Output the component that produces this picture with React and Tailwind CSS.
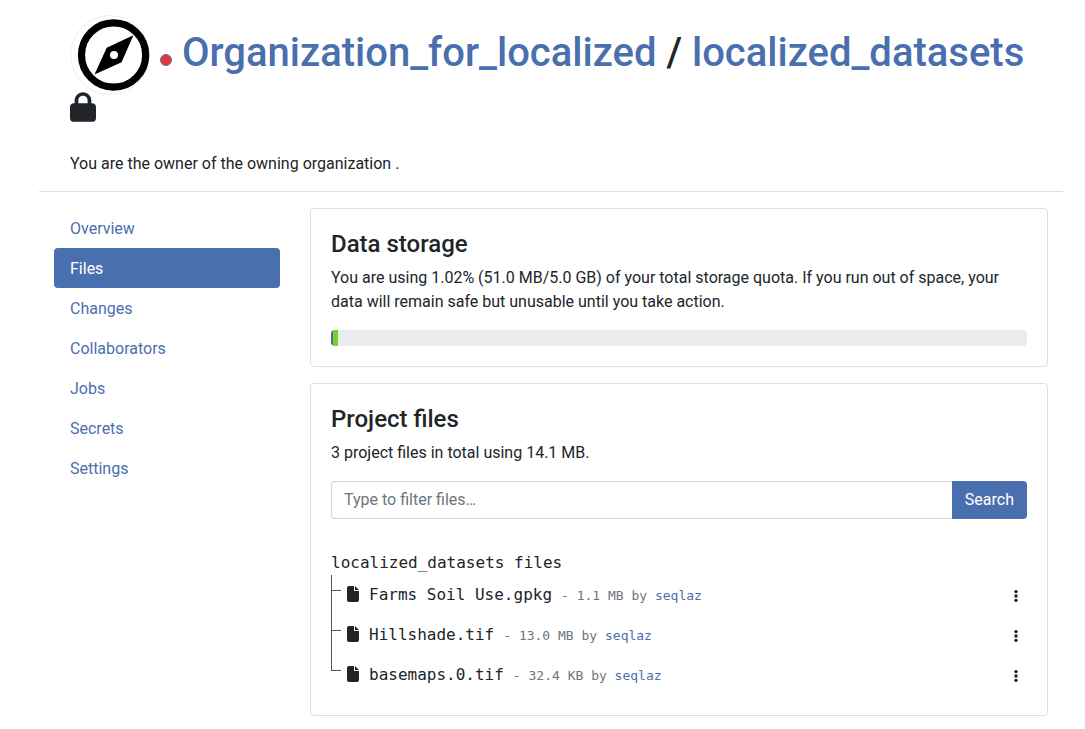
import { FaFile, FaLock } from "react-icons/fa6";

const navItems = ["Overview", "Files", "Changes", "Collaborators", "Jobs", "Secrets", "Settings"];

const files = [
  { name: "Farms Soil Use.gpkg", size: "1.1 MB", owner: "seqlaz" },
  { name: "Hillshade.tif", size: "13.0 MB", owner: "seqlaz" },
  { name: "basemaps.0.tif", size: "32.4 KB", owner: "seqlaz" },
];

function CompassAvatar() {
  return (
    <svg viewBox="0 0 80 80" className="size-20 shrink-0 rounded-full" aria-hidden="true">
      <circle cx="40" cy="40" r="39.5" fill="#fff" stroke="#ebebeb" />
      <circle cx="43.6" cy="40" r="32.1" fill="none" stroke="#000" strokeWidth="7.2" />
      <path
        fillRule="evenodd"
        d="M63.4 20.3 36.7 32.7 24.5 59.4 51.6 47.3ZM44 36a4 4 0 1 1 0 8 4 4 0 0 1 0-8Z"
      />
    </svg>
  );
}

function MoreIcon() {
  return (
    <svg viewBox="0 0 4 14" className="h-[14px] w-1" fill="currentColor" aria-hidden="true">
      <circle cx="2" cy="2.6" r="1.7" />
      <circle cx="2" cy="7" r="1.7" />
      <circle cx="2" cy="11.4" r="1.7" />
    </svg>
  );
}

function Header() {
  return (
    <header className="border-b border-[#dfdfdf] pt-[15px] pr-4 pb-[15px] pl-[31px]">
      <div className="flex items-center">
        <CompassAvatar />
        <div className="px-[10px] pt-[10px]">
          <span className="block size-3 rounded-full border border-[#6c757d] bg-[#dc3545]" />
        </div>
        <h1 className="pb-[5px] text-[40px] leading-[48px] font-medium">
          <a href="#organization" className="text-[#4a6fae]">Organization_for_localized</a>
          {" / "}
          <a href="#project" className="text-[#4a6fae]">localized_datasets</a>
        </h1>
      </div>
      <FaLock className="-mt-[3px] h-[30px] w-[26px]" aria-label="Private" />
      <p className="mt-[30px] leading-6">You are the owner of the owning organization .</p>
    </header>
  );
}

function SideNav() {
  return (
    <nav className="w-1/4 shrink-0 px-[15px]">
      {navItems.map((item) => (
        <a
          key={item}
          href={"#" + item.toLowerCase()}
          className={
            item === "Files"
              ? "block rounded bg-[#4a6fae] px-4 pt-[9px] pb-[7px] leading-6 text-white"
              : "block rounded px-4 pt-[9px] pb-[7px] leading-6 text-[#4a6fae]"
          }
        >
          {item}
        </a>
      ))}
    </nav>
  );
}

function Card({ title, children }) {
  return (
    <section className="rounded border border-[#dfdfdf] p-5">
      <h4 className="mb-2 pt-px text-2xl leading-7 font-medium">{title}</h4>
      {children}
    </section>
  );
}

function FileRow({ file, last }) {
  return (
    <li className="flex h-10">
      <div className="flex w-[10px] shrink-0 flex-col">
        <div className="h-4 border-b border-l border-[#555]" />
        {!last && <div className="grow border-l border-[#555]" />}
      </div>
      <div className="flex grow items-center pl-[6px]">
        <FaFile className="mb-[2px] h-4 w-3 shrink-0" />
        <div className="ml-[10px] flex items-baseline gap-[9px] leading-6">
          <span>{file.name}</span>
          <span className="text-[13px] text-[#6c757d]">
            {"- " + file.size + " by "}
            <a href={"#" + file.owner} className="text-[#4a6fae]">{file.owner}</a>
          </span>
        </div>
        <button type="button" aria-label={"Actions for " + file.name} className="ml-auto px-[9px] pt-[6px] pb-1">
          <MoreIcon />
        </button>
      </div>
    </li>
  );
}

export default function App() {
  return (
    <div className="mr-[22px] ml-[39px] bg-white font-[Roboto,sans-serif] text-base text-[#212529]">
      <Header />
      <div className="flex pt-4 pb-3">
        <SideNav />
        <main className="flex min-w-0 grow flex-col gap-4 px-[15px]">
          <Card title="Data storage">
            <p className="mb-4 leading-6">
              You are using 1.02% (51.0 MB/5.0 GB) of your total storage quota. If you run out of space, your data will
              remain safe but unusable until you take action.
            </p>
            <div
              role="progressbar"
              aria-label="Storage used"
              aria-valuenow={1.02}
              className="flex h-4 overflow-hidden rounded bg-[#e9ecef]"
            >
              <div className="w-[2px] bg-[#4a6fae]" />
              <div className="w-[5px] bg-[#80cc28]" />
            </div>
          </Card>
          <Card title="Project files">
            <p className="mb-4 leading-6">3 project files in total using 14.1 MB.</p>
            <form className="mb-8 flex" onSubmit={(e) => e.preventDefault()}>
              <input
                type="text"
                aria-label="Filter files"
                placeholder="Type to filter files…"
                className="h-[38px] min-w-0 grow rounded-l border border-r-0 border-[#ced4da] px-3 pb-[2px] placeholder:text-[#6c757d]"
              />
              <button type="submit" className="h-[38px] rounded-r bg-[#4a6fae] px-[13px] leading-6 text-white">
                Search
              </button>
            </form>
            <div className="font-['DejaVu_Sans_Mono',monospace]">
              <div className="leading-6">localized_datasets files</div>
              <ul>
                {files.map((file, i) => (
                  <FileRow key={file.name} file={file} last={i === files.length - 1} />
                ))}
              </ul>
            </div>
          </Card>
        </main>
      </div>
    </div>
  );
}
